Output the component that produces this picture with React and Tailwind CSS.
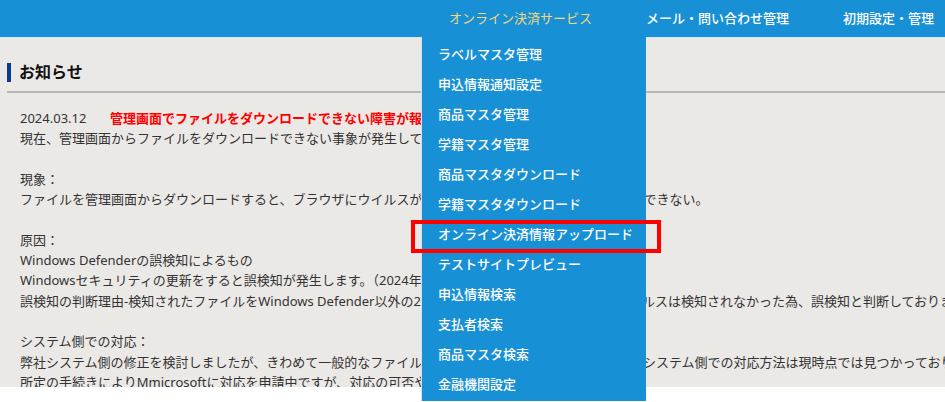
import React from "react";

const menu = [
  "ラベルマスタ管理",
  "申込情報通知設定",
  "商品マスタ管理",
  "学籍マスタ管理",
  "商品マスタダウンロード",
  "学籍マスタダウンロード",
  "オンライン決済情報アップロード",
  "テストサイトプレビュー",
  "申込情報検索",
  "支払者検索",
  "商品マスタ検索",
  "金融機関設定",
];

const lines = [
  null,
  "現在、管理画面からファイルをダウンロードできない事象が発生しています。",
  "",
  "現象：",
  "ファイルを管理画面からダウンロードすると、ブラウザにウイルスが検知され、ファイルのダウンロードができない。",
  "",
  "原因：",
  "Windows Defenderの誤検知によるもの",
  "Windowsセキュリティの更新をすると誤検知が発生します。（2024年3月12日時点）",
  "誤検知の判断理由-検知されたファイルをWindows Defender以外の2社製のソフトで確認したところ、ウイルスは検知されなかった為、誤検知と判断しております。",
  "",
  "システム側での対応：",
  "弊社システム側の修正を検討しましたが、きわめて一般的なファイルに対する誤検知が発生しているため、システム側での対応方法は現時点では見つかっておりません。",
  "所定の手続きによりMmicrosoftに対応を申請中ですが、対応の可否や時期は未定です。",
];

export default function App() {
  return (
    <div
      className="relative w-[945px] h-[402px] overflow-hidden bg-white text-[13px]"
      style={{ fontFamily: '"Noto Sans", "Noto Sans CJK JP", sans-serif' }}
    >
      <header className="h-[37px] bg-[#1890d5] flex items-center overflow-hidden whitespace-nowrap">
        <div className="w-[421px] shrink-0" />
        <div className="relative w-[197px] shrink-0 pl-[28px] text-[#f2d77e]">
          オンライン決済サービス
        </div>
        <div className="w-[197px] shrink-0 pl-[28px] text-white font-medium">
          メール・問い合わせ管理
        </div>
        <div className="w-[197px] shrink-0 pl-[28px] text-white font-medium">
          初期設定・管理
        </div>
      </header>

      <main className="h-[350px] overflow-hidden bg-[#ebe9e6] border-t border-[#d6e6f2] pl-[7px] pt-[25px] text-[#333]">
        <h2 className="flex items-center gap-[8px] h-[19px]">
          <span className="w-[4px] h-[19px] bg-[#0b3b8c]" />
          <span className="text-[16px] font-bold text-[#111] leading-[19px]">お知らせ</span>
        </h2>
        <div className="mt-[9px] h-[2px] bg-[#b9b7b4]" />
        <div className="mt-[15px] pl-[13px] leading-[20.3px] whitespace-nowrap">
          {lines.map((l, i) =>
            l === null ? (
              <div key={i} className="flex">
                <span className="w-[90px] shrink-0">2024.03.12</span>
                <span className="text-[#ff0000] font-bold">
                  管理画面でファイルをダウンロードできない障害が報告されています
                </span>
              </div>
            ) : (
              <div key={i} className="h-[20.3px]">
                {l}
              </div>
            )
          )}
        </div>
      </main>

      <nav className="absolute left-[421px] top-[37px] w-[225px] h-[364px] bg-[#1890d5] border-l border-[#cfe2f0] pt-[3px]">
        {menu.map((m) => (
          <div key={m} className="h-[30px] flex items-center pl-[16px] text-white font-medium whitespace-nowrap">
            {m}
          </div>
        ))}
      </nav>

      <div className="absolute left-[411px] top-[220px] w-[250px] h-[33px] border-[4px] border-[#ff0000]" />
    </div>
  );
}
